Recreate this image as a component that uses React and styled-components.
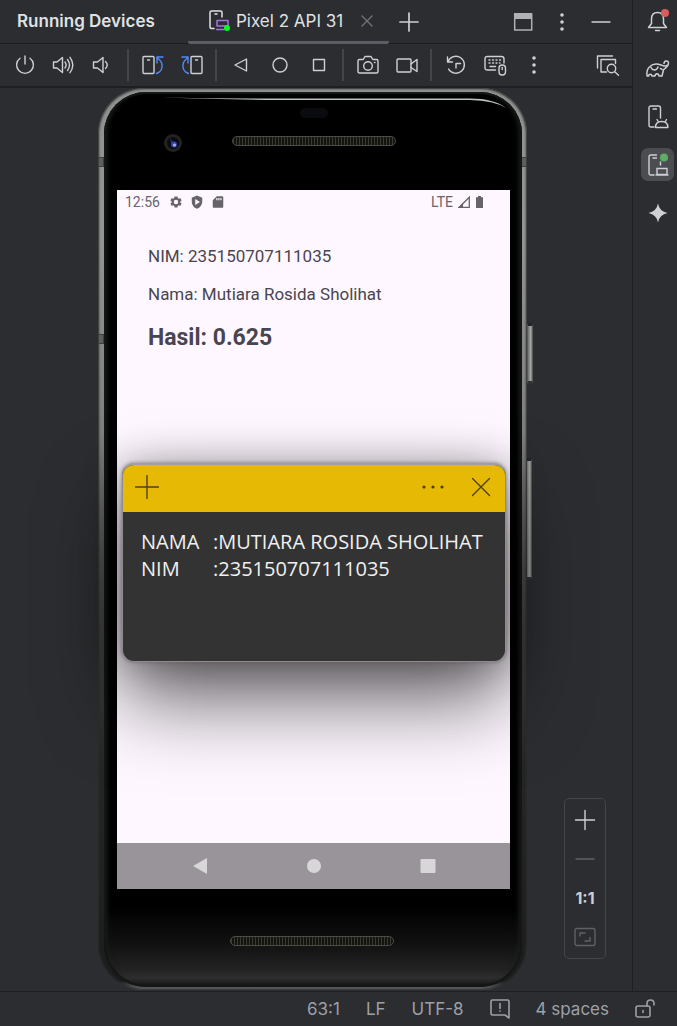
import React from "react";
import styled, { createGlobalStyle } from "styled-components";

const GlobalStyle = createGlobalStyle`
  *, *::before, *::after { box-sizing: border-box; }
  body { margin: 0; background: #2b2d30; }
  button { font: inherit; color: inherit; background: none; border: 0; padding: 0; margin: 0; cursor: pointer; }
  h1, h2, p, dl, dd, dt { margin: 0; font: inherit; }
  svg { display: block; flex: none; }
`;

const Page = styled.div`
  display: flex;
  flex-direction: column;
  min-height: 100vh;
  background: #2b2d30;
  color: #ced0d6;
  font-family: Inter, "Liberation Sans", sans-serif;
  font-size: 17px;
`;

const Workspace = styled.div`
  display: flex;
  flex: 1;
`;

const ToolWindow = styled.main`
  display: flex;
  flex-direction: column;
  flex: 1;
  min-width: 0;
`;

const Header = styled.header`
  display: flex;
  align-items: stretch;
  height: 44px;
  padding-right: 12px;
  border-bottom: 1px solid #1e1f22;
`;

const Title = styled.h1`
  display: flex;
  align-items: center;
  width: 188px;
  padding: 0 0 2px 17px;
  color: #dfe1e5;
  font-weight: 600;
  white-space: nowrap;
`;

const Tab = styled.div`
  display: flex;
  align-items: center;
  width: 201px;
  padding: 0 12px 0 21px;
  margin-bottom: -1px;
  border-bottom: 3px solid #5a5d63;
  border-radius: 2px;
`;

const TabName = styled.button`
  display: flex;
  align-items: center;
  gap: 5px;
  flex: 1;
  color: #dfe1e5;
  white-space: nowrap;
`;

const IconButton = styled.button`
  display: flex;
  align-items: center;
  justify-content: center;
  width: ${(p) => p.$width || 39}px;
  color: ${(p) => p.$color || "inherit"};
`;

const Spacer = styled.div`
  flex: 1;
`;

const Toolbar = styled.div`
  display: flex;
  align-items: center;
  height: 44px;
  padding: 0 5px 0 6px;
  border-bottom: 2px solid #1e1f22;
`;

const ToolGroup = styled.div`
  display: flex;
  align-items: center;
  height: 32px;
  padding-right: ${(p) => p.$end || 0}px;

  & > button { height: 100%; }
  & + & {
    margin-left: 4px;
    padding-left: 4px;
    border-left: 2px solid #43454a;
  }
`;

const Stage = styled.section`
  position: relative;
  display: flex;
  justify-content: center;
  flex: 1;
  padding-bottom: 1px;
`;

const Phone = styled.div`
  position: relative;
  display: flex;
  width: 436px;
  padding-right: 7px;
`;

const SideKey = styled.span`
  position: absolute;
  right: ${(p) => p.$right}px;
  top: ${(p) => p.$top}%;
  width: 6px;
  height: ${(p) => p.$height}px;
  border: 1px solid #56585a;
  border-top: 3px solid #242526;
  border-bottom: 3px solid #303132;
  border-radius: 0 2px 2px 0;
  background: linear-gradient(90deg, #6b6d6b, #a3a5a2 60%, #7a7c7a);
`;

const Metal = styled.div`
  position: relative;
  display: flex;
  flex: 1;
  padding: 4px 5px 3px 6px;
  border-radius: 46px;
  background: linear-gradient(180deg, #8e918f 0, #929593 16%, #7d807e 38%, #4a4c4c 55%, #252727 75%, #1b1c1c 99%, #6f7271 100%);
  box-shadow: inset 0 0 2px 1px #2a2c2b;
`;

const Glass = styled.div`
  position: relative;
  display: flex;
  flex-direction: column;
  flex: 1;
  min-width: 0;
  padding: 0 12px 0 13px;
  border-radius: 42px;
  background: linear-gradient(180deg, #000 0, #000 91%, #101010 95%, #222 98%, #2e2e2e 99%, #111 100%);
  box-shadow: inset 0 0 0 2px #141515, inset 6px 0 5px -3px #1d1e1e, inset -6px 0 5px -3px #1d1e1e;
`;

const Glint = styled.svg`
  position: absolute;
  top: 4px;
  right: 12px;
`;

const Band = styled.span`
  position: absolute;
  background: #5c5f5e;
  border: 1px solid #3e4040;
  ${(p) => p.$side}: 0;
  top: ${(p) => p.$top};
  width: 6px;
  height: 10px;
`;

const Forehead = styled.div`
  display: grid;
  grid-template-columns: 1fr 164px 1fr;
  height: 98px;
  padding-top: 16px;
  justify-items: center;
  align-items: start;
`;

const Camera = styled.svg`
  margin: 25px 3px 0 0;
`;

const TopCenter = styled.div`
  display: flex;
  flex-direction: column;
  align-items: center;
  gap: 18px;
`;

const Sensor = styled.span`
  width: 28px;
  height: 10px;
  border-radius: 5px;
  background: #0a0b0f;
`;

const Speaker = styled.span`
  width: 164px;
  height: 10px;
  border: 1px solid #4a4c48;
  border-radius: 5px;
  background: repeating-linear-gradient(90deg, #3a3a32 0, #3a3a32 1px, #14140f 1px, #14140f 3px);
`;

const Chin = styled.div`
  display: flex;
  justify-content: center;
  height: 98px;
  padding: 47px 4px 0 0;
`;

const Screen = styled.div`
  position: relative;
  display: flex;
  flex-direction: column;
  flex: 1;
  min-height: 560px;
  background: #fef7ff;
  color: #49454f;
  font-family: Roboto, sans-serif;
`;

const AndroidStatus = styled.div`
  display: flex;
  align-items: center;
  height: 24px;
  padding: 0 26px 0 8px;
  color: #67636a;
  font-size: 14px;
`;

const StatusIcons = styled.div`
  display: flex;
  align-items: center;
  gap: ${(p) => p.$gap}px;
  margin-left: ${(p) => p.$start || 0}px;
`;

const AppContent = styled.div`
  display: flex;
  flex-direction: column;
  flex: 1;
  gap: 18px;
  padding: 32px 31px;
  font-size: 17px;
  line-height: 20px;
`;

const Result = styled.p`
  font-size: 23px;
  line-height: 32px;
  font-weight: 700;
`;

const NavBar = styled.nav`
  display: flex;
  justify-content: center;
  height: 46px;
  background: #999499;
  color: #d9d6da;
`;

const Note = styled.article`
  position: absolute;
  top: 39%;
  left: 5px;
  right: 4px;
  height: 199px;
  display: flex;
  flex-direction: column;
  border: 1px solid #8f8b8f;
  border-top: 2px solid #a29da3;
  border-radius: 12px;
  background: #333;
  box-shadow: 0 0 3px 1px rgba(90, 84, 92, 0.4), 0 38px 80px rgba(0, 0, 0, 0.6), 0 2px 40px rgba(0, 0, 0, 0.3);
  overflow: hidden;
`;

const NoteBar = styled.div`
  display: flex;
  height: 47px;
  padding-bottom: 2px;
  background: #e6b905;
  color: #4f4210;
`;

const NoteBody = styled.dl`
  display: grid;
  grid-template-columns: 72px 1fr;
  padding: 16px 0 0 18px;
  color: #f0f0f0;
  font-family: "Segoe UI", "Open Sans", sans-serif;
  font-size: 20px;
  line-height: 27px;
  white-space: nowrap;
`;

const ZoomPanel = styled.div`
  position: absolute;
  right: 26px;
  bottom: 32px;
  display: flex;
  flex-direction: column;
  width: 42px;
  padding: 1px 0 2px;
  border: 1px solid #43454a;
  border-radius: 5px;
  font-size: 16px;
  font-weight: 700;

  & > button { width: 100%; height: 39px; }
`;

const Sidebar = styled.aside`
  display: flex;
  flex-direction: column;
  align-items: flex-start;
  gap: 15px;
  width: 45px;
  padding: 4px 3px 0 8px;
  border-left: 1px solid #1e1f22;
`;

const SideButton = styled.button`
  display: flex;
  align-items: center;
  justify-content: center;
  width: 33px;
  height: 33px;
  border-radius: 7px;
  background: ${(p) => (p.$active ? "#4b4d51" : "transparent")};
`;

const StatusBar = styled.footer`
  display: flex;
  align-items: center;
  justify-content: flex-end;
  gap: 26px;
  height: 35px;
  padding-right: 22px;
  border-top: 1px solid #1e1f22;
  color: #9da0a8;
  white-space: nowrap;
`;

function Icon({ w = 22, h = 22, children, sw = 1.4 }) {
  return (
    <svg width={w} height={h} viewBox={`0 0 ${w} ${h}`} fill="none" stroke="currentColor" strokeWidth={sw} strokeLinejoin="round" strokeLinecap="round" aria-hidden="true">
      {children}
    </svg>
  );
}

const Kebab = () => (
  <Icon>
    <g fill="currentColor" stroke="none">
      <circle cx="11" cy="4" r="1.8" />
      <circle cx="11" cy="11" r="1.8" />
      <circle cx="11" cy="18" r="1.8" />
    </g>
  </Icon>
);

const Power = () => (
  <Icon>
    <path d="M11 2v8M6 4.2a8.4 8.4 0 1 0 10 0" />
  </Icon>
);

const VolumeUp = () => (
  <Icon>
    <path d="M1.5 8v6h3.5l5.5 4.5v-15L5 8zM13 8q2.200 3 0 6M15.500 5.500q4 5.500 0 11M18 3.300q5.600 7.700 0 15.400" />
  </Icon>
);

const VolumeDown = () => (
  <Icon>
    <path d="M3.500 8v6h4l5.500 4.500v-15L7.500 8zM15.500 7.500q3.500 3.500 0 7" />
  </Icon>
);

const RotateLeft = () => (
  <Icon>
    <rect x="1" y="2.500" width="11" height="17" rx="1" />
    <path d="M5.500 6h2" />
    <path stroke="#548af7" d="M14.500 19.500c7-2.500 7.500-11 1-15.500M15 9V3h6" />
  </Icon>
);

const RotateRight = () => (
  <Icon>
    <rect x="10" y="2.500" width="11" height="17" rx="1" />
    <path d="M14.500 6h2" />
    <path stroke="#548af7" d="M7.500 19.500c-7-2.500-7.500-11-1-15.500M7 9V3H1" />
  </Icon>
);

const CameraIcon = () => (
  <Icon>
    <path d="M2.500 5.500h3.700L8 2.500h6l1.800 3h3.700q1.500 0 1.500 1.500v10.500q0 1.500-1.500 1.500h-17Q1 19 1 17.500V7q0-1.500 1.500-1.500z" />
    <circle cx="11" cy="12" r="4.300" />
    <path d="M17.500 8.500h.5" />
  </Icon>
);

const Video = () => (
  <Icon>
    <rect x="1" y="5" width="14" height="13" rx="1" />
    <path d="M15 10l6-4.500v12L15 13.500" />
  </Icon>
);

const Snapshot = () => (
  <Icon>
    <path d="M2.500 3v5h5M3 7.500A8.500 8.500 0 1 1 3.500 15M11 14v-4.500h4.500" />
  </Icon>
);

const Keyboard = () => (
  <Icon w={24} h={22}>
    <path d="M12.500 16H4.500Q2 16 2 13.500V5Q2 2.500 4.500 2.500h14Q21 2.500 21 5v4" />
    <path strokeDasharray="1 2.500" d="M6 6h12M6 9h11" />
    <path d="M7 12.500h5.500" />
    <rect x="16" y="11" width="6.500" height="10" rx="3.200" />
    <path d="M19.200 13.500v2" />
  </Icon>
);

const Screenshot = () => (
  <Icon w={24} h={22}>
    <path d="M1.500 14V2h15M10.500 18H5V5.500h14.500v4" />
    <circle cx="15.500" cy="14.500" r="4.200" />
    <path d="M18.700 17.700l3.800 3.500" />
  </Icon>
);

const DeviceTab = () => (
  <Icon w={22} h={22} sw={1.5}>
    <path d="M5 18.500H2.500Q1 18.500 1 17V2.500Q1 1 2.500 1h9Q13 1 13 2.500V7M6 4h2" />
    <path stroke="#a571e6" d="M8 16v-5.500h11V16zM7.500 19.500H15" />
    <circle cx="18" cy="18" r="3" fill="#00ff1a" stroke="none" />
  </Icon>
);

const Bell = () => (
  <Icon w={24} h={24} sw={1.5}>
    <path d="M2.500 18.500h18l-3-4V10c0-4-2-6.500-6-6.500S5.500 6 5.500 10v4.500z" />
    <path d="M9.500 21.500h4" />
    <circle cx="19" cy="4" r="4" fill="#db5c5c" stroke="none" />
  </Icon>
);

const Elephant = () => (
  <Icon w={26} h={22} sw={1.5}>
    <path d="M19 5.500c0-3 4.500-3.500 4.500-.5 0 3.500-3.500 5.500-5 6.500-.5 2.500-1 4.500-1.500 6.500h-3c-.5-3-3.500-3-4 0H7c-.5-2.500-3-2.500-3.500 0H2c-.5-4.500 1-8 3-9.500 2.500-2.500 7-3 11-1.500 2.500 1.200 4.500 1.500 6 .2" />
    <path d="M6 9.500c1.500 3.500 5.500 3.500 7-.5M15.500 10.500l1.500.8" />
  </Icon>
);

const DeviceManager = () => (
  <Icon w={24} h={24}>
    <path d="M8 22H5Q3 22 3 20V3Q3 1 5 1h7.500q2 0 2 2v10M7 4h3.500" />
    <path d="M9.500 22.500q0-6 6.200-6t6.200 6zM11 14.500l1.500 2.500M20.500 14.500L19 17" />
  </Icon>
);

const RunningDevices = () => (
  <Icon w={24} h={24}>
    <path d="M8 22H5Q3 22 3 20V4Q3 2 5 2h5.500M7 5h3.500M14.500 9v3" />
    <path strokeLinejoin="miter" d="M11 15.500h10v6H11zM10 22h12" />
    <circle cx="18" cy="4.500" r="4" fill="#5fad65" stroke="none" />
  </Icon>
);

const Sparkle = () => (
  <Icon>
    <path fill="currentColor" stroke="none" d="M11 1.500q1.500 8 9.500 9.500-8 1.500-9.500 9.500Q9.500 12.500 1.500 11 9.500 9.500 11 1.500z" />
  </Icon>
);

export default function App() {
  return (
    <>
      <GlobalStyle />
      <Page>
        <Workspace>
          <ToolWindow>
            <Header>
              <Title>Running Devices</Title>
              <Tab>
                <TabName><DeviceTab />Pixel 2 API 31</TabName>
                <IconButton $width={20} $color="#6f737a" aria-label="Close tab">
                  <Icon w={12} h={12}><path d="M1 1l10 10M11 1L1 11" /></Icon>
                </IconButton>
              </Tab>
              <IconButton aria-label="Add device">
                <Icon sw={1.7}><path d="M11 2v18M2 11h18" /></Icon>
              </IconButton>
              <Spacer />
              <IconButton aria-label="Window" $color="#afb1b3">
                <Icon sw={1.500}><path strokeLinejoin="miter" d="M2.700 3h17v16h-17z" /><path fill="currentColor" stroke="none" d="M2 2h18v6H2z" /></Icon>
              </IconButton>
              <IconButton aria-label="Options"><Kebab /></IconButton>
              <IconButton aria-label="Hide"><Icon><path d="M2 11h18" /></Icon></IconButton>
            </Header>

            <Toolbar>
              <ToolGroup $end={3}>
                <IconButton $width={38} aria-label="Power"><Power /></IconButton>
                <IconButton $width={38} aria-label="Volume up"><VolumeUp /></IconButton>
                <IconButton $width={38} aria-label="Volume down"><VolumeDown /></IconButton>
              </ToolGroup>
              <ToolGroup>
                <IconButton aria-label="Rotate left"><RotateLeft /></IconButton>
                <IconButton aria-label="Rotate right"><RotateRight /></IconButton>
              </ToolGroup>
              <ToolGroup>
                <IconButton aria-label="Back"><Icon><path d="M5 11l11.500-6v12z" /></Icon></IconButton>
                <IconButton aria-label="Home"><Icon><circle cx="11" cy="11" r="7" /></Icon></IconButton>
                <IconButton aria-label="Overview"><Icon><rect x="5.500" y="5.500" width="11" height="11" /></Icon></IconButton>
              </ToolGroup>
              <ToolGroup>
                <IconButton aria-label="Take screenshot"><CameraIcon /></IconButton>
                <IconButton aria-label="Record screen"><Video /></IconButton>
              </ToolGroup>
              <ToolGroup>
                <IconButton aria-label="Snapshots"><Snapshot /></IconButton>
                <IconButton aria-label="Hardware input"><Keyboard /></IconButton>
                <IconButton aria-label="More"><Kebab /></IconButton>
              </ToolGroup>
              <Spacer />
              <IconButton aria-label="Layout inspector"><Screenshot /></IconButton>
            </Toolbar>

            <Stage>
              <Phone>
                <SideKey $right={1} $top={26} $height={61} />
                <SideKey $right={2} $top={41} $height={122} />
                <Metal>
                  <Band $side="left" $top="69px" />
                  <Band $side="right" $top="69px" />
                  <Band $side="left" $top="246px" />
                  <Glass>
                    <Glint width="350" height="16" viewBox="0 0 350 16" aria-hidden="true">
                      <path d="M0 1.500Q60 2.500 120 2.500H310Q334 2.500 346 12Q334 4.500 310 4H120Q60 3.500 0 1.500z" fill="#b9c2c2" />
                    </Glint>
                    <Forehead>
                      <Camera width="20" height="20" viewBox="0 0 20 20" aria-hidden="true">
                        <circle cx="10" cy="10" r="9" fill="#24221f" />
                        <circle cx="10" cy="10" r="6" fill="#0b0b14" />
                        <path d="M7 5l4 5-2 3z" fill="#25307a" />
                        <circle cx="11" cy="11.500" r="3" fill="#3547a8" />
                        <circle cx="11.500" cy="12" r="1.500" fill="#a5b4f5" />
                      </Camera>
                      <TopCenter>
                        <Sensor />
                        <Speaker />
                      </TopCenter>
                    </Forehead>
                    <Screen>
                      <AndroidStatus>
                        <span>12:56</span>
                        <StatusIcons $gap={7} $start={9}>
                          <svg width="14" height="14" viewBox="0 0 24 24" fill="currentColor" aria-hidden="true">
                            <path fillRule="evenodd" d="M19.400 13a7 7 0 0 0 0-2l2.200-1.700-2.300-4-2.600 1a8 8 0 0 0-1.700-1L14.500 2.500h-5L9 5.300a8 8 0 0 0-1.700 1l-2.600-1-2.300 4L4.600 11a7 7 0 0 0 0 2l-2.200 1.700 2.300 4 2.600-1a8 8 0 0 0 1.700 1l.5 2.800h5l.5-2.800a8 8 0 0 0 1.700-1l2.600 1 2.300-4zM12 15.800a3.800 3.800 0 1 1 0-7.600 3.800 3.800 0 0 1 0 7.600z" />
                          </svg>
                          <svg width="14" height="14" viewBox="0 0 24 24" fill="currentColor" aria-hidden="true">
                            <path fillRule="evenodd" d="M12 1L3 4.500V11c0 6 4 10.500 9 12.500 5-2 9-6.500 9-12.500V4.500zM9 7l8 5-8 5z" />
                          </svg>
                          <svg width="14" height="14" viewBox="0 0 24 24" fill="currentColor" aria-hidden="true">
                            <path fillRule="evenodd" d="M10 2L3 9v11q0 2 2 2h14q2 0 2-2V4q0-2-2-2zM9 5h2v4H9zm3.500 0h2v4h-2zM16 5h2v4h-2z" />
                          </svg>
                        </StatusIcons>
                        <Spacer />
                        <StatusIcons $gap={5}>
                          <span>LTE</span>
                          <svg width="12" height="12" viewBox="0 0 12 12" aria-hidden="true">
                            <path d="M1.200 11.300L11.300 1.200v10.100z" fill="none" stroke="currentColor" strokeWidth="1.300" />
                            <path d="M0 12l5-5v5z" fill="currentColor" />
                          </svg>
                          <svg width="9" height="12" viewBox="0 0 9 12" aria-hidden="true">
                            <path d="M3 0h3v1.300h2V12H1V1.300h2z" fill="currentColor" />
                          </svg>
                        </StatusIcons>
                      </AndroidStatus>
                      <AppContent>
                        <p>NIM: 235150707111035</p>
                        <p>Nama: Mutiara Rosida Sholihat</p>
                        <Result>Hasil: 0.625</Result>
                      </AppContent>
                      <NavBar>
                        <IconButton $width={114} aria-label="Back">
                          <svg width="16" height="16" viewBox="0 0 16 16" fill="currentColor" aria-hidden="true"><path d="M1 8l14-8v16z" /></svg>
                        </IconButton>
                        <IconButton $width={114} aria-label="Home">
                          <svg width="16" height="16" viewBox="0 0 16 16" fill="currentColor" aria-hidden="true"><circle cx="8" cy="8" r="7" /></svg>
                        </IconButton>
                        <IconButton $width={114} aria-label="Recents">
                          <svg width="16" height="16" viewBox="0 0 16 16" fill="currentColor" aria-hidden="true"><rect x="0.500" y="1" width="15" height="14" rx="1" /></svg>
                        </IconButton>
                      </NavBar>
                      <Note>
                        <NoteBar>
                          <IconButton $width={48} aria-label="New note">
                            <Icon w={24} h={24}><path d="M12 .5v23M.5 12h23" /></Icon>
                          </IconButton>
                          <Spacer />
                          <IconButton $width={48} aria-label="Note menu">
                            <Icon w={24} h={24}>
                              <g fill="currentColor" stroke="none">
                                <circle cx="3" cy="12" r="1.600" /><circle cx="12" cy="12" r="1.600" /><circle cx="21" cy="12" r="1.600" />
                              </g>
                            </Icon>
                          </IconButton>
                          <IconButton $width={48} aria-label="Close note">
                            <Icon w={20} h={20}><path d="M1.500 1.500l17 17M18.500 1.500l-17 17" /></Icon>
                          </IconButton>
                        </NoteBar>
                        <NoteBody>
                          <dt>NAMA</dt>
                          <dd>:MUTIARA ROSIDA SHOLIHAT</dd>
                          <dt>NIM</dt>
                          <dd>:235150707111035</dd>
                        </NoteBody>
                      </Note>
                    </Screen>
                    <Chin><Speaker /></Chin>
                  </Glass>
                </Metal>
              </Phone>
              <ZoomPanel>
                <IconButton aria-label="Zoom in"><Icon><path d="M11 1.500v19M1.500 11h19" /></Icon></IconButton>
                <IconButton aria-label="Zoom out" $color="#5f6166"><Icon><path d="M2 11h18" /></Icon></IconButton>
                <IconButton>1:1</IconButton>
                <IconButton aria-label="Fit to window" $color="#5f6166">
                  <Icon><rect x="1" y="2.500" width="20" height="17" rx="2" /><path d="M6 10V7h5M16 11.500v3.500h-5" /></Icon>
                </IconButton>
              </ZoomPanel>
            </Stage>
          </ToolWindow>

          <Sidebar>
            <SideButton aria-label="Notifications"><Bell /></SideButton>
            <SideButton aria-label="Gradle"><Elephant /></SideButton>
            <SideButton aria-label="Device manager"><DeviceManager /></SideButton>
            <SideButton aria-label="Running devices" $active><RunningDevices /></SideButton>
            <SideButton aria-label="Assistant"><Sparkle /></SideButton>
          </Sidebar>
        </Workspace>

        <StatusBar>
          <span>63:1</span>
          <span>LF</span>
          <span>UTF-8</span>
          <Icon w={20} h={20} sw={1.600}><path d="M19 19l-4-3H2.500Q1 16 1 14.500v-12Q1 1 2.500 1h15Q19 1 19 2.500zM10 4.500v5M10 12v.3" /></Icon>
          <span>4 spaces</span>
          <Icon w={20} h={20} sw={1.600}><rect x="1" y="7" width="14" height="11" rx="2" /><path d="M12 7V4.500Q12 1 15.500 1T19 4.500V6M8 11.500v2" /></Icon>
        </StatusBar>
      </Page>
    </>
  );
}
